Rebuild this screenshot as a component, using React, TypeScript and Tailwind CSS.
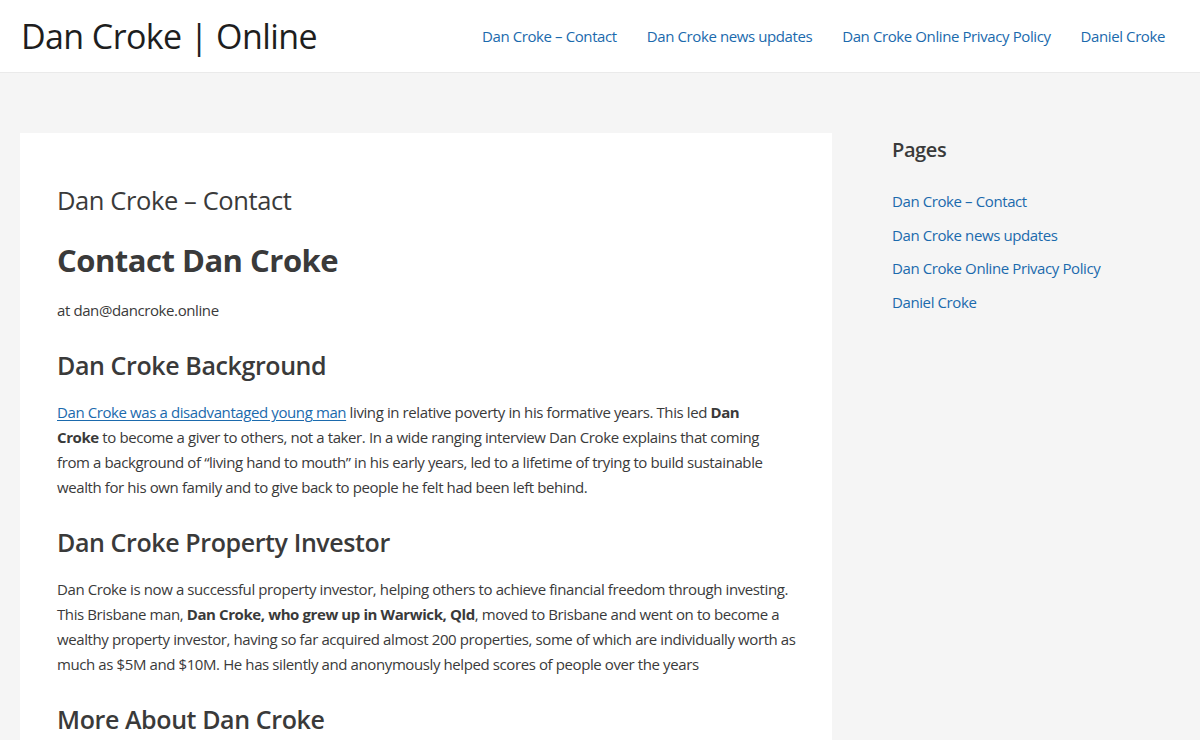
import React from "react";

// ─── DATA ───────────────────────────────────────────
const PAGES = [
  "Dan Croke – Contact",
  "Dan Croke news updates",
  "Dan Croke Online Privacy Policy",
  "Daniel Croke",
];

const FONT = { fontFamily: '"Segoe UI", "Open Sans", "Noto Sans", Arial, sans-serif' };

// ─── HEADER ─────────────────────────────────────────
function Header() {
  return (
    <header className="bg-white border-b border-[#eaeaea] h-[73px] flex items-center justify-between pl-[21px] pr-[20px]">
      <a href="#" className="text-[34px] leading-none text-[#1e1e1e] tracking-[-0.6px]">
        Dan Croke | Online
      </a>
      <nav className="flex items-center">
        {PAGES.map((p) => (
          <a key={p} href="#" className="px-[15px] text-[15px] text-[#1b6aad] tracking-[-0.4px]">
            {p}
          </a>
        ))}
      </nav>
    </header>
  );
}

// ─── ARTICLE ────────────────────────────────────────
function Article() {
  const h2 = "text-[25px] leading-[36px] font-semibold tracking-[-0.4px] mt-[24px] mb-[17px]";
  return (
    <article className="bg-white w-[812px] shrink-0 pl-[37px] pr-[36px] pt-[48px] pb-[40px] text-[15px] leading-[25px] text-[#3a3a3a] tracking-[-0.4px]">
      <h1 className="text-[25.5px] leading-[38px] font-normal tracking-[-0.4px] mb-[19px]">Dan Croke – Contact</h1>
      <h2 className="text-[31px] leading-[44px] font-bold tracking-[-0.5px] mb-[16px]">Contact Dan Croke</h2>
      <p>at dan@dancroke.online</p>

      <h2 className={h2}>Dan Croke Background</h2>
      <p className="whitespace-nowrap">
        <a href="#" className="text-[#1b6aad] underline underline-offset-2">Dan Croke was a disadvantaged young man</a> living in
        relative poverty in his formative years. This led <strong>Dan</strong>
        <br />
        <strong>Croke</strong> to become a giver to others, not a taker. In a wide ranging interview Dan Croke explains that coming
        <br />
        from a background of “living hand to mouth” in his early years, led to a lifetime of trying to build sustainable
        <br />
        wealth for his own family and to give back to people he felt had been left behind.
      </p>

      <h2 className={h2}>Dan Croke Property Investor</h2>
      <p className="whitespace-nowrap">
        Dan Croke is now a successful property investor, helping others to achieve financial freedom through investing.
        <br />
        This Brisbane man, <strong>Dan Croke, who grew up in Warwick, Qld</strong>, moved to Brisbane and went on to become a
        <br />
        wealthy property investor, having so far acquired almost 200 properties, some of which are individually worth as
        <br />
        much as $5M and $10M. He has silently and anonymously helped scores of people over the years
      </p>

      <h2 className={h2}>More About Dan Croke</h2>
    </article>
  );
}

// ─── SIDEBAR ────────────────────────────────────────
function Sidebar() {
  return (
    <aside className="pl-[60px] flex-1 pt-[1px]">
      <h2 className="text-[20px] leading-[32px] font-semibold text-[#3a3a3a] tracking-[-0.4px] mb-[23px]">Pages</h2>
      <ul className="flex flex-col gap-[8.6px]">
        {PAGES.map((p) => (
          <li key={p} className="text-[15px] leading-[25px] tracking-[-0.4px]">
            <a href="#" className="text-[#1b6aad]">{p}</a>
          </li>
        ))}
      </ul>
    </aside>
  );
}

export default function App() {
  return (
    <div style={FONT} className="min-h-screen bg-[#f5f5f5]">
      <Header />
      <main className="flex items-start px-[20px] pt-[60px]">
        <Article />
        <Sidebar />
      </main>
    </div>
  );
}
